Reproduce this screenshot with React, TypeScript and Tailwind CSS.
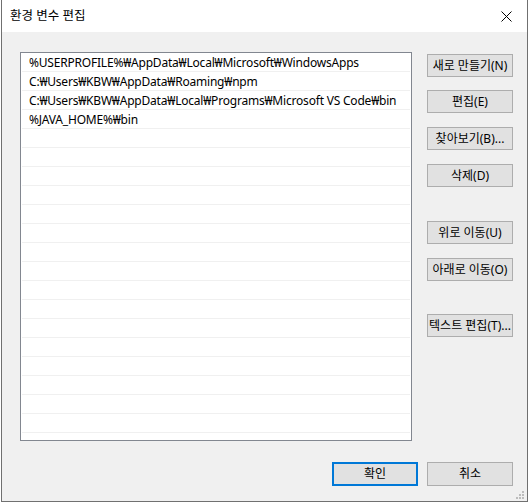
import React from 'react';

const paths = [
  '%USERPROFILE%₩AppData₩Local₩Microsoft₩WindowsApps',
  'C:₩Users₩KBW₩AppData₩Roaming₩npm',
  'C:₩Users₩KBW₩AppData₩Local₩Programs₩Microsoft VS Code₩bin',
  '%JAVA_HOME%₩bin',
];

const sideButtons = [
  { label: '새로 만들기(N)', mt: 'mt-[2px]' },
  { label: '편집(E)', mt: 'mt-[13px]' },
  { label: '찾아보기(B)...', mt: 'mt-[14px]' },
  { label: '삭제(D)', mt: 'mt-[14px]' },
  { label: '위로 이동(U)', mt: 'mt-[34px]' },
  { label: '아래로 이동(O)', mt: 'mt-[14px]' },
  { label: '텍스트 편집(T)...', mt: 'mt-[33px]' },
];

const font = { fontFamily: '"Noto Sans", "Noto Sans CJK KR", sans-serif' };

function WinButton({ label, focused, className = '' }: { label: string; focused?: boolean; className?: string }) {
  return (
    <button
      className={`w-[86px] h-[23px] flex items-center justify-center bg-[#e1e1e1] text-[12px] text-black leading-none whitespace-nowrap ${
        focused ? 'border-2 border-[#0078d7]' : 'border border-[#adadad]'
      } ${className}`}
    >
      {label}
    </button>
  );
}

export default function App() {
  const rows = Array.from({ length: 20 }, (_, i) => paths[i] ?? '');

  return (
    <div className="w-[530px] h-[503px] bg-white" style={font}>
      <div className="ml-[1px] w-[527px] h-[502px] border-x border-b border-[#707070] flex flex-col">
        {/* title bar */}
        <div className="h-[32px] bg-white flex items-center justify-between pl-[8px] pr-[15px] shrink-0">
          <span className="text-[12.5px] text-black">환경 변수 편집</span>
          <svg width="11" height="11" viewBox="0 0 11 11">
            <path d="M0.5 0.5 L10.5 10.5 M10.5 0.5 L0.5 10.5" stroke="#000" strokeWidth="1" />
          </svg>
        </div>

        {/* body */}
        <div className="relative flex-1 bg-[#f0f0f0] pt-[20px] pl-[18px] pr-[14px]">
          <div className="flex gap-[15px]">
            <div className="w-[392px] h-[389px] bg-white border border-[#828790] px-[1px] overflow-hidden">
              {rows.map((text, i) => (
                <div
                  key={i}
                  className="h-[19px] border-b border-[#f0f0f0] pl-[7px] pt-[2px] flex items-center text-[12px] tracking-[-0.2px] text-black whitespace-nowrap"
                >
                  {text}
                </div>
              ))}
            </div>
            <div className="flex flex-col">
              {sideButtons.map((b) => (
                <WinButton key={b.label} label={b.label} className={b.mt} />
              ))}
            </div>
          </div>

          <div className="flex justify-end gap-[9px] mt-[21px]">
            <WinButton label="확인" focused className="h-[24px]" />
            <WinButton label="취소" className="h-[24px]" />
          </div>

          {/* resize grip */}
          <svg className="absolute right-[2px] bottom-[1px]" width="10" height="10" viewBox="0 0 10 10">
            <rect x="7" y="1" width="2" height="2" fill="#bcbcbc" />
            <rect x="4" y="4" width="2" height="2" fill="#bcbcbc" />
            <rect x="7" y="4" width="2" height="2" fill="#bcbcbc" />
            <rect x="1" y="7" width="2" height="2" fill="#bcbcbc" />
            <rect x="4" y="7" width="2" height="2" fill="#bcbcbc" />
            <rect x="7" y="7" width="2" height="2" fill="#bcbcbc" />
          </svg>
        </div>
      </div>
    </div>
  );
}
